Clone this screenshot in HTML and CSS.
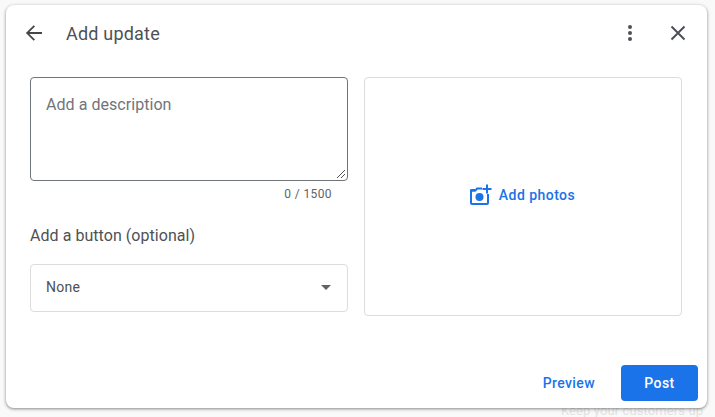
FILE: index.html
```html
<!DOCTYPE html>
<html lang="en">
<head>
<meta charset="utf-8">
<title>Add update</title>
<link rel="stylesheet" href="styles.css">
</head>
<body>
<div class="backdrop-text">
  <span class="ghost ghost-bottom">Keep your customers up</span>
</div>
<main class="dialog">
  <header class="head">
    <button class="icon-btn" aria-label="Back">
      <svg width="24" height="24" viewBox="0 0 24 24"><path d="M20 11.100H7.400l5.600-5.600L11.700 4.200 3.900 12l7.800 7.800 1.300-1.300-5.600-5.600H20z" fill="#444746"/></svg>
    </button>
    <h1 class="title">Add update</h1>
    <button class="icon-btn more" aria-label="More">
      <svg width="24" height="24" viewBox="0 0 24 24"><circle cx="12" cy="6" r="2" fill="#4d5156"/><circle cx="12" cy="12" r="2" fill="#4d5156"/><circle cx="12" cy="18" r="2" fill="#4d5156"/></svg>
    </button>
    <button class="icon-btn close" aria-label="Close">
      <svg width="24" height="24" viewBox="0 0 24 24"><path d="M5.500 5.500l13 13M18.500 5.500l-13 13" stroke="#4d5156" stroke-width="2" fill="none"/></svg>
    </button>
  </header>
  <section class="body">
    <div class="col-left">
      <div class="textarea">
        <span class="placeholder">Add a description</span>
        <svg class="grip" width="10" height="10" viewBox="0 0 10 10"><path d="M1 9l8-8M5 9l4-4" stroke="#555" stroke-width="1" fill="none"/></svg>
      </div>
      <div class="counter">0 / 1500</div>
      <div class="label">Add a button (optional)</div>
      <div class="select">
        <span>None</span>
        <span class="caret"></span>
      </div>
    </div>
    <div class="photos">
      <svg width="24" height="24" viewBox="0 0 24 24"><path d="M2 6.500h5l1.600-2H14v2H9.600L8 8.500H4V20h15v-9h2v9a2 2 0 0 1-2 2H4a2 2 0 0 1-2-2z" fill="#1a73e8"/><path d="M2 8a2 2 0 0 1 2-2h3v2.500H4z" fill="#1a73e8"/><circle cx="11.500" cy="14" r="4" fill="#1a73e8"/><path d="M18 1.500h2V5h3.500v2H20v3.500h-2V7h-3.500V5H18z" fill="#1a73e8"/></svg>
      <span class="photos-text">Add photos</span>
    </div>
  </section>
  <footer class="foot">
    <button class="btn-text">Preview</button>
    <button class="btn-primary">Post</button>
  </footer>
</main>
</body>
</html>
```
FILE: styles.css
```css
* { box-sizing: border-box; }
html, body { margin: 0; height: 100%; }
body {
  width: 715px;
  height: 417px;
  overflow: hidden;
  background: #f9f9fa;
  font-family: Roboto, "Liberation Sans", sans-serif;
  padding: 5px 8px 9px 6px;
  position: relative;
}
.backdrop-text { position: absolute; inset: 0; }
.ghost { position: absolute; color: #e2e2e2; font-size: 13px; line-height: 13px; white-space: nowrap; }
.ghost-bottom { left: 561px; top: 404px; letter-spacing: .1px; }
.dialog {
  position: relative;
  width: 701px;
  height: 403px;
  background: #fff;
  border-radius: 8px;
  box-shadow: 0 1px 3px 1px rgba(60,64,67,.26), 0 1px 2px rgba(60,64,67,.3);
  display: flex;
  flex-direction: column;
}
.head {
  height: 56px;
  padding: 0 17px 0 16px;
  display: flex;
  align-items: center;
  flex: none;
}
.icon-btn {
  width: 24px;
  height: 24px;
  padding: 0;
  border: 0;
  background: none;
  display: flex;
}
.title {
  margin: 0 0 0 20px;
  font-size: 18px;
  font-weight: 400;
  color: #4d5156;
  letter-spacing: .2px;
  flex: 1;
}
.close { margin-left: 24px; }
.body {
  flex: none;
  height: 239px;
  margin-top: 16px;
  padding: 0 24px;
  display: flex;
  gap: 16px;
}
.col-left { width: 318px; display: flex; flex-direction: column; }
.textarea {
  position: relative;
  height: 104px;
  border: 1px solid #70757a;
  border-radius: 4px;
  padding: 17px 15px;
  font-size: 16px;
  line-height: 20px;
  letter-spacing: .05px;
  color: #70757a;
}
.grip { position: absolute; right: 1px; bottom: 1px; }
.counter {
  margin-top: 6px;
  padding-right: 16px;
  text-align: right;
  font-size: 12px;
  line-height: 14px;
  letter-spacing: .4px;
  color: #5f6368;
}
.label {
  margin-top: 25px;
  font-size: 16px;
  line-height: 20px;
  letter-spacing: .05px;
  color: #4d5156;
}
.select {
  margin-top: 18px;
  height: 48px;
  border: 1px solid #dadce0;
  border-radius: 4px;
  padding: 0 15px 2px;
  display: flex;
  align-items: center;
  justify-content: space-between;
  font-size: 14px;
  letter-spacing: .3px;
  color: #4d5156;
}
.caret {
  width: 0;
  height: 0;
  margin-right: 1px;
  border-left: 5px solid transparent;
  border-right: 5px solid transparent;
  border-top: 5px solid #5f6368;
}
.photos {
  width: 318px;
  border: 1px solid #dadce0;
  border-radius: 4px;
  padding: 0 3px 3px 0;
  display: flex;
  align-items: center;
  justify-content: center;
  gap: 7px;
  color: #1a73e8;
}
.photos-text { font-size: 14px; font-weight: 500; letter-spacing: .45px; }
.foot {
  flex: 1;
  padding: 0 9px 7px 0;
  display: flex;
  align-items: flex-end;
  justify-content: flex-end;
  gap: 26px;
}
.btn-text, .btn-primary {
  height: 36px;
  border: 0;
  border-radius: 4px;
  font-family: inherit;
  font-size: 14px;
  font-weight: 500;
  letter-spacing: .4px;
  padding: 0;
}
.btn-text { background: none; color: #1a73e8; }
.btn-primary { width: 77px; background: #1a73e8; color: #fff; }
```
